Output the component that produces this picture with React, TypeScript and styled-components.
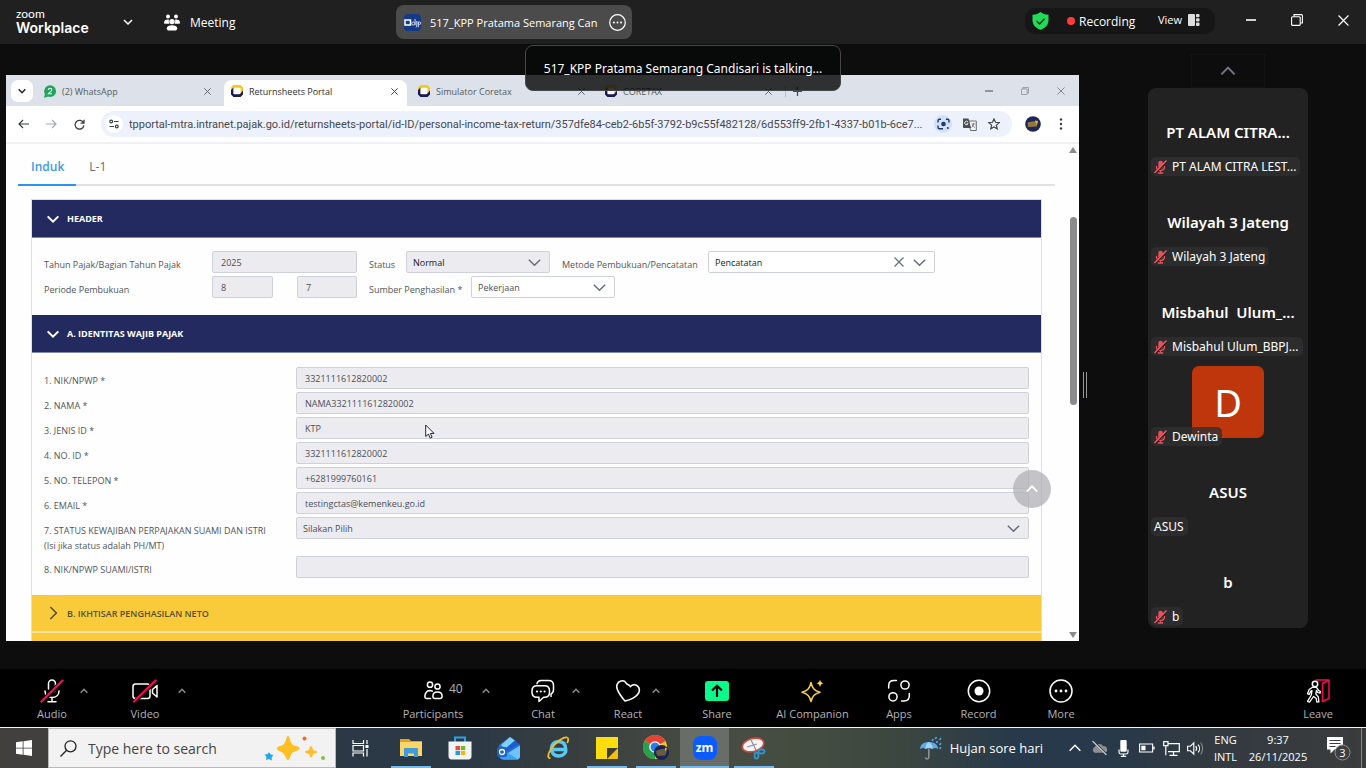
import React from "react";
import styled, { createGlobalStyle } from "styled-components";

const GlobalStyle = createGlobalStyle`
  * { box-sizing: border-box; }
  body { margin: 0; background: #0d0d0d; font-family: "Open Sans", "Noto Sans", sans-serif; }
  button, input, select { font-family: inherit; margin: 0; }
  button { border: 0; padding: 0; background: none; color: inherit; cursor: pointer; }
  svg { display: block; flex: none; }
`;

/* ---------- shell ---------- */

const Screen = styled.div`
  position: relative;
  display: flex;
  flex-direction: column;
  height: 100vh;
  color: #fff;
`;

const TitleBar = styled.header`
  display: flex;
  flex: none;
  height: 44px;
  background: #202020;
`;

const BrandArea = styled.div`
  display: flex;
  align-items: center;
  flex: 0 0 396px;
  padding-left: 16px;
`;

const Brand = styled.div`
  width: 106px;
  padding-bottom: 2px;
  font-family: Lato, sans-serif;
  font-size: 12px;
  line-height: 14px;
  strong { display: block; font-family: Inter, sans-serif; font-size: 14px; line-height: 14px; font-weight: 600; }
`;

const MeetingLabel = styled.div`
  display: flex;
  align-items: center;
  gap: 10px;
  margin-left: 30px;
  font-size: 12px;
`;

const MeetingPill = styled.div`
  display: flex;
  align-items: center;
  align-self: center;
  gap: 9px;
  width: 236px;
  height: 34px;
  padding: 0 6px 0 8px;
  border-radius: 8px;
  background: #4b4b4b;
  font-size: 11px;
  span { flex: 1; overflow: hidden; white-space: nowrap; }
`;

const StatusPill = styled.div`
  display: flex;
  align-items: center;
  width: 190px;
  height: 26px;
  margin: 8px 0 0 auto;
  padding: 0 15px 0 7px;
  border-radius: 10px;
  background: #161616;
  font-size: 12px;
`;

const Recording = styled.span`
  display: flex;
  align-items: center;
  gap: 4px;
  margin-left: 18px;
  &::before { content: ""; width: 8px; height: 8px; border-radius: 50%; background: #ff3b3b; }
`;

const ViewButton = styled.button`
  display: flex;
  align-items: center;
  gap: 6px;
  margin-left: auto;
  padding-bottom: 3px;
  font-size: 11px;
`;

const WindowControls = styled.div`
  display: flex;
  margin-left: 13px;
  height: 40px;
  button { display: grid; place-items: center; width: 46px; }
`;

const Stage = styled.main`
  display: flex;
  flex: 1;
  min-height: 0;
  padding: 0 58px 0 6px;
`;

const Toast = styled.div`
  position: absolute;
  top: 45px;
  left: 50%;
  transform: translateX(-50%);
  z-index: 5;
  display: flex;
  align-items: center;
  justify-content: center;
  width: 316px;
  height: 46px;
  border: 1px solid #454749;
  border-radius: 8px;
  background: rgba(7, 9, 9, 0.82);
  font-family: "Noto Sans", sans-serif;
  font-size: 12px;
  white-space: nowrap;
`;

/* ---------- shared browser window ---------- */

const SharedWindow = styled.section`
  position: relative;
  display: flex;
  flex: 1;
  flex-direction: column;
  min-width: 0;
  margin: 31px 0 28px;
  overflow: hidden;
  background: #fefefe;
  color: #4a4f56;
`;

const TabStrip = styled.div`
  display: flex;
  align-items: flex-end;
  flex: none;
  height: 31px;
  padding-left: 5px;
  background: #dde2ea;
`;

const TabSearch = styled.button`
  display: grid;
  place-items: center;
  width: 22px;
  height: 22px;
  margin: 0 4px 4px 0;
  border-radius: 7px;
  background: #fff;
`;

const BrowserTab = styled.div<{ $active?: boolean }>`
  display: flex;
  align-items: center;
  gap: 6px;
  width: 183px;
  height: 26px;
  margin-right: 4px;
  padding: 0 9px 4px 7px;
  border-radius: 8px 8px 0 0;
  background: ${(p) => (p.$active ? "#fff" : "transparent")};
  color: ${(p) => (p.$active ? "#2c2e31" : "#565b61")};
  font-size: 9px;
  span { flex: 1; }
`;

const NewTab = styled.button`
  width: 25px;
  height: 12px;
  margin-bottom: 9px;
  border-left: 1px solid #b9bec6;
  svg { margin-left: 7px; }
`;

const BrowserControls = styled.div`
  display: flex;
  align-self: center;
  margin-left: auto;
  color: #7e838a;
  button { display: grid; place-items: center; width: 36px; height: 24px; }
`;

const AddressRow = styled.div`
  display: flex;
  align-items: center;
  flex: none;
  height: 38px;
  padding: 0 4px 0 3px;
  border-bottom: 2px solid #f0f0f2;
  background: #fff;
  color: #3b3e43;
`;

const NavButton = styled.button`
  display: grid;
  place-items: center;
  width: 28px;
  height: 28px;
`;

const AddressPill = styled.div`
  display: flex;
  align-items: center;
  flex: 1;
  min-width: 0;
  height: 26px;
  margin: 0 13px 0 8px;
  padding: 0 12px 0 4px;
  border-radius: 13px;
  background: #edf1fb;
  input {
    flex: 1;
    min-width: 0;
    margin: 0 1px 0 6px;
    padding: 0;
    border: 0;
    outline: 0;
    background: none;
    color: #45484d;
    font-family: Roboto, sans-serif;
    font-size: 11px;
    text-overflow: ellipsis;
  }
`;

const RoundIcon = styled.button<{ $bg: string }>`
  display: grid;
  place-items: center;
  width: 18px;
  height: 18px;
  border-radius: 50%;
  background: ${(p) => p.$bg};
`;

const AddressActions = styled.div`
  display: flex;
  align-items: center;
  gap: 11px;
`;

const ProfileButton = styled.button`
  margin-right: 6px;
`;

const PageArea = styled.div`
  position: relative;
  display: flex;
  flex: 1;
  min-height: 0;
`;

const PageContent = styled.div`
  flex: 1;
  min-width: 0;
  padding: 0 12px;
  overflow: hidden;
`;

const ScrollTrack = styled.div`
  display: flex;
  flex-direction: column;
  align-items: center;
  flex: none;
  width: 12px;
  padding: 3px 0 3px;
  div { flex: none; width: 7px; height: 188px; margin: 64px 0 auto; border-radius: 4px; background: #8b8b8f; }
`;

const FormTabs = styled.nav`
  display: flex;
  height: 42px;
  border-bottom: 2px solid #dfe1e4;
`;

const FormTab = styled.button<{ $active?: boolean }>`
  height: 42px;
  padding: 5px 12px 0 13px;
  border-bottom: 2px solid ${(p) => (p.$active ? "#2e93ee" : "transparent")};
  color: ${(p) => (p.$active ? "#3c9bee" : "#666b71")};
  font-size: 12px;
  font-weight: ${(p) => (p.$active ? 600 : 400)};
`;

const Accordion = styled.div`
  margin: 13px 13px 0;
  border: 1px solid #dcdfe6;
  border-bottom: 0;
`;

const SectionHeader = styled.button<{ $closed?: boolean }>`
  display: flex;
  align-items: center;
  gap: 6px;
  width: 100%;
  height: 38px;
  padding-left: 13px;
  border-bottom: ${(p) => (p.$closed ? "2px solid #f6e3a4" : "1px solid #8187ab")};
  background: ${(p) => (p.$closed ? "#f9cb3b" : "#222a5f")};
  color: ${(p) => (p.$closed ? "#574f30" : "#fff")};
  font-size: 9px;
  font-weight: ${(p) => (p.$closed ? 600 : 700)};
`;

const HeaderBody = styled.div`
  display: flex;
  flex-direction: column;
  gap: 3px;
  padding: 13px 12px 17px;
`;

const HeaderRow = styled.div`
  display: flex;
  gap: 12px;
`;

const PeriodRange = styled.div`
  display: flex;
  justify-content: space-between;
  flex: none;
  width: 145px;
`;

const Label = styled.label<{ $w?: number }>`
  flex: none;
  width: ${(p) => (p.$w ? p.$w + "px" : "252px")};
  padding-top: 6px;
  color: #50545b;
  font-size: 9px;
  line-height: 15px;
  white-space: nowrap;
`;

const Field = styled.input<{ $w?: number }>`
  flex: ${(p) => (p.$w ? "none" : 1)};
  width: ${(p) => (p.$w ? p.$w + "px" : "auto")};
  min-width: 0;
  height: 22px;
  padding: 0 8px;
  border: 1px solid #ced1d9;
  border-radius: 2px;
  background: #ebebf0;
  color: #4b4f56;
  font-size: 9px;
`;

const SelectBox = styled.div<{ $w?: number; $white?: boolean; $dark?: boolean }>`
  display: flex;
  align-items: center;
  gap: 7px;
  flex: ${(p) => (p.$w ? "none" : 1)};
  width: ${(p) => (p.$w ? p.$w + "px" : "auto")};
  height: 22px;
  padding: 0 6px;
  border: 1px solid #ced1d9;
  border-radius: 2px;
  background: ${(p) => (p.$white ? "#fff" : "#ebebf0")};
  color: #666c75;
  select {
    flex: 1;
    min-width: 0;
    padding: 0;
    border: 0;
    appearance: none;
    background: none;
    color: ${(p) => (p.$dark ? "#17191c" : "#4b4f56")};
    font-size: 9px;
  }
`;

const IdentityBody = styled(HeaderBody)`
  padding-top: 14px;
`;

const IdentityRow = styled.div`
  display: flex;
  align-items: flex-start;
`;

const BackToTop = styled.button`
  position: absolute;
  right: 28px;
  bottom: 133px;
  display: grid;
  place-items: center;
  width: 38px;
  height: 38px;
  border-radius: 50%;
  background: rgba(176, 176, 182, 0.75);
`;

const Pointer = styled.svg`
  position: absolute;
  top: 349px;
  left: 419px;
`;

/* ---------- participants gallery ---------- */

const Splitter = styled.div`
  align-self: center;
  width: 4px;
  height: 26px;
  margin: 56px 0 0 4px;
  border: solid #9a9a9a;
  border-width: 0 1px;
`;

const GalleryColumn = styled.aside`
  flex: none;
  width: 160px;
  margin: 10px 0 0 61px;
`;

const GalleryUp = styled.button`
  display: grid;
  place-items: center;
  width: 74px;
  height: 34px;
  margin: 0 auto;
  border: 1px solid #121212;
`;

const Gallery = styled.ul`
  margin: 0;
  padding: 0;
  border-radius: 8px;
  background: #222;
  font-family: "Noto Sans", sans-serif;
  list-style: none;
`;

const Tile = styled.li`
  position: relative;
  display: grid;
  place-items: center;
  height: 90px;
  padding-bottom: 2px;
  overflow: hidden;
  font-size: 15px;
  font-weight: 600;
  white-space: pre;
`;

const Avatar = styled.div`
  display: grid;
  place-items: center;
  width: 72px;
  height: 72px;
  border-radius: 7px;
  background: #c0360c;
  font-size: 38px;
  font-weight: 400;
`;

const NameTag = styled.div`
  position: absolute;
  bottom: 2px;
  left: 3px;
  display: flex;
  align-items: center;
  gap: 5px;
  height: 19px;
  padding: 0 4px 0 3px;
  border-radius: 5px;
  background: rgba(48, 48, 48, 0.8);
  font-size: 12px;
  font-weight: 400;
`;

/* ---------- meeting toolbar ---------- */

const Toolbar = styled.footer`
  display: flex;
  flex: none;
  height: 59px;
  padding: 0 24px 0 28px;
  border-bottom: 1px solid #f4f4f4;
  background: #000;
  color: #b4b4b4;
`;

const ToolGroup = styled.div<{ $left?: boolean }>`
  display: flex;
  gap: 24px;
  width: ${(p) => (p.$left ? "360px" : "auto")};
`;

const LeaveSlot = styled.div`
  display: flex;
  margin-left: auto;
`;

const ToolSlot = styled.div`
  display: flex;
`;

const ToolButton = styled.button<{ $w: number }>`
  width: ${(p) => p.$w}px;
  padding-top: 2px;
  color: #b4b4b4;
  font-size: 11px;
  line-height: 16px;
  text-align: center;
  white-space: nowrap;
`;

const ToolIcon = styled.span`
  position: relative;
  display: flex;
  align-items: center;
  justify-content: center;
  height: 28px;
  margin-bottom: 1px;
  color: #fff;
`;

const Count = styled.span`
  position: absolute;
  top: 4px;
  left: 61px;
  color: #b4b4b4;
  font-size: 12px;
`;

const Caret = styled.button`
  display: grid;
  place-items: center;
  width: 16px;
  height: 44px;
  color: #8d8d8d;
`;

/* ---------- taskbar ---------- */

const Taskbar = styled.footer`
  display: flex;
  flex: none;
  height: 40px;
  background: linear-gradient(90deg, #42403d 0, #3b3c3d 20%, #2a3945 25%, #2c3945 35%, #383e3f 42%, #484d43 52%, #434c40 60%, #3a4541 67%, #27394a 74%, #27394a 81%, #323a41 88%, #3b3c3c 100%);
`;

const StartButton = styled.button`
  display: grid;
  place-items: center;
  width: 48px;
`;

const SearchBox = styled.label`
  display: flex;
  align-items: center;
  width: 288px;
  padding: 0 9px 0 11px;
  border: 1px solid #b9b9b9;
  background: #f2f2f2;
  input {
    flex: 1;
    min-width: 0;
    margin-left: 11px;
    padding: 0;
    border: 0;
    outline: 0;
    background: none;
    font-size: 14px;
  }
  input::placeholder { color: #454545; opacity: 1; }
`;

const TaskItem = styled.button<{ $open?: boolean; $active?: boolean }>`
  display: grid;
  place-items: center;
  width: 49px;
  background: linear-gradient(#76b9ed, #76b9ed) bottom / ${(p) => (p.$active ? "49px" : p.$open ? "40px" : "0")} 2px no-repeat,
    ${(p) => (p.$active ? "#696d68" : "transparent")};
`;

const TaskViewItem = styled(TaskItem)`
  width: 50px;
  padding-right: 2px;
`;

const Weather = styled.button`
  display: flex;
  align-items: center;
  gap: 7px;
  margin-left: auto;
  font-size: 13px;
`;

const Tray = styled.div`
  display: flex;
  align-items: center;
  margin-left: 20px;
  button { display: grid; place-items: center; width: 24px; height: 40px; }
`;

const TrayText = styled.div<{ $w: number }>`
  width: ${(p) => p.$w}px;
  font-size: 11px;
  line-height: 17px;
  text-align: center;
  align-self: center;
`;

const NotifyButton = styled.button`
  display: grid;
  place-items: center;
  width: 49px;
  padding-left: 4px;
`;

const ShowDesktop = styled.button`
  width: 5px;
  border-left: 1px solid #85888a;
`;

/* ---------- icons ---------- */

const Chevron = ({ size = 12, dir = "down", w = 1.5, color = "currentColor" }: { size?: number; dir?: "down" | "up" | "right"; w?: number; color?: string }) => {
  const d = { down: "M2 4 L6 8 L10 4", up: "M2 8 L6 4 L10 8", right: "M4 1.5 L8.5 6 L4 10.5" }[dir];
  return (
    <svg width={size} height={size} viewBox="0 0 12 12" fill="none" stroke={color} strokeWidth={w}>
      <path d={d} />
    </svg>
  );
};

const Cross = ({ size = 7, w = 1.3 }: { size?: number; w?: number }) => (
  <svg width={size} height={size} viewBox="0 0 10 10" fill="none" stroke="currentColor" strokeWidth={w}>
    <path d="M.5 .5 L9.5 9.5 M9.5 .5 L.5 9.5" />
  </svg>
);

const Restore = ({ size = 12 }: { size?: number }) => (
  <svg width={size} height={size} viewBox="0 0 12 12" fill="none" stroke="currentColor" strokeWidth="1.1">
    <rect x=".6" y="2.8" width="8.6" height="8.6" rx="1" />
    <path d="M3 2.6V.6h7.4a1 1 0 0 1 1 1V9H9.4" />
  </svg>
);

const Dash = ({ size = 10 }: { size?: number }) => (
  <svg width={size} height="2" viewBox="0 0 10 2" preserveAspectRatio="none"><path d="M0 1h10" stroke="currentColor" strokeWidth="1.6" /></svg>
);

const PeopleIcon = () => (
  <svg width="16" height="17" viewBox="0 0 16 17" fill="#fff">
    <circle cx="4" cy="2.6" r="2" /><circle cx="12" cy="2.6" r="2" />
    <circle cx="8" cy="7.6" r="2.7" />
    <path d="M0 8.8c0-2 1.6-3.2 3.8-3.2.5 0 .9.1 1.2.2-.5 1.6-.2 2.9.6 4H1.4C.5 9.8 0 9.4 0 8.8zM16 8.8c0-2-1.6-3.2-3.8-3.2-.5 0-.9.1-1.2.2.5 1.6.2 2.9-.6 4h4.2c.9 0 1.4-.4 1.4-1z" />
    <path d="M2.8 14.3c0-2 2.2-3.1 5.2-3.1s5.2 1.1 5.2 3.1c0 1.4-.9 2.3-2.2 2.3H5c-1.3 0-2.2-.9-2.2-2.3z" />
  </svg>
);

const OrgIcon = () => (
  <svg width="17" height="17" viewBox="0 0 17 17">
    <rect width="17" height="17" rx="4" fill="#143a86" />
    <path d="M1 6h5.5v5H1z" fill="none" stroke="#fff" strokeWidth="1.5" />
    <g fill="none" stroke="#cfdcf5" strokeWidth="1">
      <circle cx="9.3" cy="9.5" r="1.5" /><path d="M11.1 5v6.2M12.8 7v5.5l-1 .8M14.3 13.3V7.5" /><circle cx="15.5" cy="9.2" r="1.2" />
    </g>
  </svg>
);

const MoreCircle = ({ size = 17, w = 1.2 }: { size?: number; w?: number }) => (
  <svg width={size} height={size} viewBox="0 0 24 24" fill="none" stroke="currentColor" strokeWidth={(w * 24) / size}>
    <circle cx="12" cy="12" r="11" />
    <g fill="currentColor" stroke="none"><circle cx="7" cy="12" r="1.4" /><circle cx="12" cy="12" r="1.4" /><circle cx="17" cy="12" r="1.4" /></g>
  </svg>
);

const ShieldIcon = () => (
  <svg width="17" height="18" viewBox="0 0 17 18">
    <path d="M8.5 0C10.5 1.7 13 2.6 16.5 2.7V8c0 5-3.3 8.3-8 9.8C3.8 16.3.5 13 .5 8V2.7C4 2.6 6.5 1.7 8.5 0z" fill="#23d959" />
    <path d="M4.6 9l2.9 2.9 5-5.2" fill="none" stroke="#123d1f" strokeWidth="1.5" />
  </svg>
);

const ViewIcon = () => (
  <svg width="12" height="12" viewBox="0 0 12 12" fill="#dcdcdc">
    <rect y="0" width="7" height="12" rx="1" /><rect x="8" width="3.5" height="3.3" rx="1" /><rect x="8" y="4.3" width="3.5" height="3.3" rx="1" /><rect x="8" y="8.6" width="3.5" height="3.3" rx="1" />
  </svg>
);

const WhatsIcon = () => (
  <svg width="12" height="13" viewBox="0 0 12 13">
    <circle cx="6.1" cy="6.2" r="5.9" fill="#22a35b" /><path d="M0 12.8l1-4 3 3z" fill="#22a35b" />
    <path d="M4.3 5c0-1.1.8-1.7 1.8-1.7s1.7.6 1.7 1.5c0 1.3-1.8 2-3.5 4h3.7" fill="none" stroke="#e8fff0" strokeWidth="1.1" />
  </svg>
);

const CoreIcon = () => (
  <svg width="12" height="12" viewBox="0 0 12 12">
    <path d="M2.5 0H9.5l2.5 2.5V6.5L9.5 9V3H4L0 6V2.5z" fill="#f6c81e" />
    <path d="M0 5l2.5-2.5V9H9l3-3.5V9.5L9.5 12h-7L0 9.5z" fill="#1d1b54" />
    <rect x="2.7" y="2.7" width="6.5" height="6.5" rx="1" fill="#fff" />
  </svg>
);

const BackArrow = ({ flip, color }: { flip?: boolean; color: string }) => (
  <svg width="11" height="10" viewBox="0 0 11 10" fill="none" stroke={color} strokeWidth="1.2">
    <path d={flip ? "M0 5h10M6 1l4 4-4 4" : "M11 5H1M5 1L1 5l4 4"} />
  </svg>
);

const ReloadIcon = () => (
  <svg width="11" height="11" viewBox="0 0 11 11" fill="none" stroke="#3b3e43" strokeWidth="1.3">
    <path d="M9.6 4A4.4 4.4 0 1 0 9.9 6.3M10 .8v3.4H6.6" />
  </svg>
);

const TuneIcon = () => (
  <svg width="10" height="10" viewBox="0 0 10 10" fill="none" stroke="#3b3e43" strokeWidth="1.2">
    <circle cx="2.2" cy="2.5" r="1.4" /><path d="M5 2.5h4.5M.5 7.5H5" /><circle cx="7.8" cy="7.5" r="1.4" />
  </svg>
);

const LensIcon = () => (
  <svg width="13" height="12" viewBox="0 0 13 12" fill="none" stroke="#1b3a6b" strokeWidth="1.4">
    <path d="M1 4.5V2.8C1 1.800 1.500 1.200 2.500 1.200H4M9 1.200h1.500c1 0 1.500.6 1.500 1.600v1.700M1 7.500v1.700c0 1 .5 1.600 1.500 1.600h3.500" />
    <circle cx="6.500" cy="6" r="1.600" fill="#1b3a6b" /><circle cx="10.800" cy="9.900" r="1" fill="#1b3a6b" stroke="none" />
  </svg>
);

const TranslateIcon = () => (
  <svg width="14" height="13" viewBox="0 0 14 13">
    <path d="M5.5 3h7.8v9.5H7.5z" fill="#f3f4f6" stroke="#6a6e73" />
    <path d="M0 .5h5.5L8 10H1.2C.4 10 0 9.6 0 9z" fill="#4a4d52" />
    <path d="M5 4a1.8 1.8 0 1 0 .1 1.7H3.5" fill="none" stroke="#fff" strokeWidth=".9" />
    <path d="M8.5 6h4M10.5 5v1c-.2 1.6-1 2.7-2 3.5M9.3 7c.6 1.2 1.5 2 2.7 2.6" fill="none" stroke="#6a6e73" strokeWidth=".8" />
  </svg>
);

const StarIcon = () => (
  <svg width="12" height="12" viewBox="0 0 12 12" fill="none" stroke="#44474c" strokeWidth="1.2">
    <path d="M6 .9l1.5 3.4 3.7.3-2.8 2.5.8 3.7L6 8.9l-3.2 1.9.8-3.7L.8 4.6l3.7-.3z" />
  </svg>
);

const ProfileIcon = () => (
  <svg width="16" height="16" viewBox="0 0 16 16">
    <circle cx="8" cy="8" r="7.8" fill="#1f2558" /><path d="M2.5 6.5l5-1 5.5-.5-1 5.5-9 .5z" fill="#8e7a3c" /><path d="M10 4.5l3 .5-1.5 4z" fill="#e2b739" />
  </svg>
);

const MutedMic = () => (
  <svg width="13" height="14" viewBox="0 0 13 14">
    <rect x="4.3" y=".8" width="4.6" height="8" rx="2.3" fill="#e8515c" />
    <path d="M2.5 6v.8c0 2 1.6 3.7 4 3.7s4-1.7 4-3.7V6M6.5 10.5v2.3M3.8 13h5.4" fill="none" stroke="#e8515c" strokeWidth="1.3" />
    <path d="M1 13L13 1" stroke="#222" strokeWidth="2.4" /><path d="M.5 13L12.5 .5" stroke="#f0606a" strokeWidth="1.4" />
  </svg>
);

const stroke = { fill: "none", stroke: "#fff", strokeWidth: 1.5, strokeLinecap: "round" as const, strokeLinejoin: "round" as const };

const AudioIcon = () => (
  <svg width="24" height="24" viewBox="0 0 24 24" {...stroke}>
    <path d="M8.5 10V4.5a3.5 3.5 0 0 1 7 0V10a3.5 3.5 0 0 1-5 3.2" />
    <path d="M5 12c0 4 3 6.5 7 6.5s7-2.5 7-6.5M12 18.5v4M8 22.7h8" />
    <path d="M2 22.5L23 1.5" stroke="#000" strokeWidth="4.5" /><path d="M1.5 22.5L22.5 1.5" stroke="#f50b54" strokeWidth="2.4" />
  </svg>
);

const VideoIcon = () => (
  <svg width="26" height="24" viewBox="0 0 26 24" {...stroke}>
    <path d="M18 9V17c0 1.6-1 2.5-2.5 2.5H3.5C2 19.5 1 18.6 1 17V7.5C1 6 2 5 3.5 5H15c2 0 3 1 3 3zM20.5 10.5L25 6.5v11.5l-4.5-4z" />
    <path d="M2.5 23L24 1.5" stroke="#000" strokeWidth="4" /><path d="M2 22.5L23.5 1.5" stroke="#f50b54" strokeWidth="2.4" />
  </svg>
);

const ParticipantsIcon = () => (
  <svg width="19" height="19" viewBox="0 0 19 19" {...stroke}>
    <circle cx="6" cy="3.7" r="2.6" /><circle cx="13.5" cy="5.5" r="2.6" />
    <path d="M6.5 17.5H2.8c-1.2 0-2-.8-1.9-2C1.1 12 3 9.6 5.8 9.4c1 0 1.9.3 2.6.7M13.5 11c-2.7 0-4.6 1.7-4.6 4.2 0 1.5.9 2.3 2.2 2.3h4.8c1.3 0 2.2-.8 2.2-2.3 0-2.5-1.9-4.2-4.6-4.2z" />
  </svg>
);

const ChatIcon = () => (
  <svg width="24" height="24" viewBox="0 0 24 24" {...stroke}>
    <path d="M6 4.7C6.5 2.5 8 1.5 10 1.5h7.5C20.5 1.5 22.5 3.5 22.5 6.5v4c0 2.5-.8 3.7-2.5 4.5v2.5" />
    <path d="M6 6.7h7.5c3 0 5 2 5 5v1.5c0 3-2 5-5 5h-.8l-4.7 4.3V18.2H6c-3 0-5-2-5-5v-1.5c0-3 2-5 5-5z" />
    <g fill="#fff" stroke="none"><circle cx="6" cy="12.5" r="1.1" /><circle cx="9.8" cy="12.5" r="1.1" /><circle cx="13.6" cy="12.5" r="1.1" /></g>
  </svg>
);

const HeartIcon = () => (
  <svg width="26" height="24" viewBox="0 0 26 24" {...stroke} strokeWidth="1.6">
    <path d="M11.5 4.7C10.2 2.3 7.7 1.3 5.3 2.2 2.3 3.3 1 6.7 2.2 10c1.3 4 4.3 8 7.8 12 5.2-1.3 9.8-3.3 12.6-6.6 2.3-2.7 2.5-6.2 0-8.3-2.3-2-5.3-1.6-7.1.5-.8-1.3-2.5-2.3-4-2.9z" />
  </svg>
);

const ShareIcon = () => (
  <svg width="24" height="20" viewBox="0 0 24 20">
    <rect width="24" height="20" rx="3" fill="#08fb8b" /><path d="M12 16V5M7 9.5L12 4.7l5 4.8" fill="none" stroke="#000" strokeWidth="2.2" />
  </svg>
);

const SparkIcon = () => (
  <svg width="24" height="24" viewBox="0 0 24 24" {...stroke} stroke="#ffcf42">
    <path d="M10 3.5c1.3 5.8 3.3 8 9 9.7-5.7 1.7-7.7 4-9 9.3-1.3-5.3-3.3-7.6-9-9.3 5.7-1.7 7.7-3.9 9-9.7z" />
    <path d="M19 .5c.6 2.3 1.3 3 3.6 3.7-2.3.8-3 1.5-3.6 3.9-.6-2.4-1.3-3.1-3.6-3.9 2.3-.7 3-1.4 3.6-3.7z" fill="#ffcf42" stroke="none" />
  </svg>
);

const AppsIcon = () => (
  <svg width="24" height="24" viewBox="0 0 24 24" {...stroke}>
    <path d="M9.5 1.5H7C3.5 1.5 1.7 3.3 1.7 6.7V9M14.5 22H17c3.5 0 5.3-1.8 5.3-5.2v-2.3" />
    <circle cx="18" cy="6" r="4.1" /><circle cx="6" cy="17.8" r="4.1" />
  </svg>
);

const RecordIcon = () => (
  <svg width="24" height="24" viewBox="0 0 24 24" {...stroke}>
    <circle cx="12" cy="12" r="10.7" /><circle cx="12" cy="12" r="4.5" fill="#fff" stroke="none" />
  </svg>
);

const LeaveIcon = () => (
  <svg width="24" height="24" viewBox="0 0 24 24" {...stroke}>
    <path d="M10 1h13v18.500l-6.500 3V4.500L23 1" stroke="#f50b54" />
    <circle cx="9" cy="5" r="2.700" />
    <path d="M6.500 8.300L3.200 10.500 1.500 14.800l1.700.6 1.600-3.200 1.200-.6-.7 4.400L1.500 22.300l2 .9L7.500 17.500l2.700 2 .7 3.700 2-.3-.6-5L9.800 15l.6-3.700 1.300 2.200 2.300.7.400-1.700-1.700-.8L10.500 8.300z" strokeWidth="1.300" />
  </svg>
);

const WindowsIcon = () => (
  <svg width="16" height="16" viewBox="0 0 16 16" fill="#fff"><path d="M0 2.3l6.7-1v6.4H0zM7.5 1.2L16 0v7.7H7.5zM0 8.4h6.7v6.3L0 13.7zM7.5 8.4H16V16l-8.5-1.2z" /></svg>
);

const SearchIcon = () => (
  <svg width="17" height="17" viewBox="0 0 17 17" fill="none" stroke="#222" strokeWidth="1.3"><circle cx="10.5" cy="6.3" r="5.5" /><path d="M6.6 10.3L.5 16.5" /></svg>
);

const SparkleArt = () => (
  <svg width="62" height="26" viewBox="0 0 62 26">
    <path d="M24 1c2 0 2 6.5 4.5 8.500S35.500 11 35.500 13.500s-4.500 2-7 4S26 25 24 25s-2.500-5-5-7-6-2-6-4.500 4-2 6.500-4S22 1 24 1z" fill="#fdbf22" />
    <path d="M47 11c1.5 0 1.5 3 2.5 4s3.500.5 3.500 2-2.500 1-3.500 2-1 3.500-2.500 3.500-1-2.500-2.500-3.500-3.500-.5-3.500-2 2.500-1 3.500-2 1-4 2.500-4z" fill="#fdbf32" />
    <path d="M5 17l1.500 2.500 3 .5-2 2.500.5 3-3-1.500-3 1 .5-3-2-2.500 3-.3z" fill="#1da7ee" />
    <circle cx="40.500" cy="3.500" r="2" fill="#ef6a2c" /><circle cx="59" cy="23" r="2" fill="#7fc33f" />
  </svg>
);

const TaskViewIcon = () => (
  <svg width="17" height="17" viewBox="0 0 17 17" fill="none" stroke="#fff" strokeWidth="1.2">
    <path d="M1 0v3.5h10.5V0M1 16.5V13h10.5v3.5M1 5.5h10.5v5.5H1zM15 0v4M15 9v7.5" /><path d="M13.5 5h3v3h-3z" fill="#fff" stroke="none" />
  </svg>
);

const FolderIcon = () => (
  <svg width="22" height="20" viewBox="0 0 22 20"><path d="M0 1h9l2 2h11v6H0z" fill="#e2a01d" /><path d="M0 4h22v14H0z" fill="#fbd568" /><path d="M4 19v-8c0-.6.4-1 1-1h12c.6 0 1 .4 1 1v8h-4v-3.5H8V19z" fill="#409bd8" /></svg>
);

const StoreIcon = () => (
  <svg width="24" height="24" viewBox="0 0 24 24"><path d="M7 6V1.5h10V6" fill="none" stroke="#2ba4e6" strokeWidth="2" /><path d="M.5 5.5h23V20c0 2-1 3.5-3 3.5h-17c-2 0-3-1.5-3-3.5z" fill="#f3f4f6" /><path d="M7.5 10H12v4H7.5z" fill="#e9502b" /><path d="M12.8 10h4.4v4h-4.4z" fill="#78b72a" /><path d="M7.5 14.8H12V19H7.5z" fill="#1e9fe5" /><path d="M12.8 14.8h4.4V19h-4.4z" fill="#f8b613" /></svg>
);

const OutlookIcon = () => (
  <svg width="24" height="24" viewBox="0 0 24 24"><path d="M2 9L12 1.5Q13 1 14 1.5L23 9v11c0 2-1 3-3 3H5c-2 0-3-1-3-3z" fill="#2a6fdc" /><path d="M4 9L13 1l5 3.5L8 13z" fill="#7fd0f9" /><path d="M8 13L18 4.5l4 3.5L11 15z" fill="#1d5ccf" /><path d="M23 9.5V20c0 2-1 3.5-3 3.5H6L11 17z" fill="#6cc4fa" /><path d="M3 20l8-3 10 6.5H6c-2 0-3-1.5-3-3.5z" fill="#3aa0f2" /><rect y="11" width="10" height="10" rx="2" fill="#1763c6" /><circle cx="5" cy="16" r="2.5" fill="none" stroke="#fff" strokeWidth="1.3" /></svg>
);

const ExplorerIcon = () => (
  <svg width="24" height="24" viewBox="0 0 24 24" fill="none"><path d="M20 15c-1.2 3.3-3.8 5-7.3 5-4.5 0-7.3-2.9-7.3-7.2S8.3 5.4 12.7 5.4c4.3 0 7.2 3 7 8H6.5" stroke="#5bc8f4" strokeWidth="3.5" /><path d="M4.5 22c-3.3.8-3-4 1-9.5S17 .5 21 1.5c2 .6 1.2 3.5.2 5.5" stroke="#f1c022" strokeWidth="1.8" /></svg>
);

const StickyIcon = () => (
  <svg width="22" height="22" viewBox="0 0 22 22"><path d="M0 0h22v11L11 22H0z" fill="#fedc0e" /><path d="M11 11h11v11H11z" fill="#3f3d3a" /><path d="M11 22l11-11v9.5c0 1-.5 1.5-1.5 1.5z" fill="#f2c006" /></svg>
);

const ChromeIcon = () => (
  <svg width="26" height="26" viewBox="0 0 26 26"><circle cx="12" cy="12" r="12" fill="#f3c22b" /><path d="M12 12L1.6 6A12 12 0 0 1 22.4 6z" fill="#e14434" /><path d="M12 12L12 24A12 12 0 0 1 1.6 6L6.5 9z" fill="#26a14c" /><circle cx="12" cy="12" r="5.8" fill="#fff" /><circle cx="12" cy="12" r="4.5" fill="#2d7be9" /><circle cx="18.5" cy="17.5" r="7.5" fill="#1b2153" /><path d="M12.5 16l6-2 6-.5-2 7-8 .5z" fill="#665c40" /><path d="M22 12.5l2 1-2 3z" fill="#e5b72e" /></svg>
);

const ZoomBadge = styled.span`
  display: grid;
  place-items: center;
  width: 24px;
  height: 24px;
  padding-bottom: 2px;
  border-radius: 8px;
  background: #0b5cff;
  color: #fff;
  font-size: 12px;
  font-weight: 700;
`;

const SnipIcon = () => (
  <svg width="25" height="23" viewBox="0 0 25 23"><ellipse cx="12" cy="8" rx="11" ry="6.5" transform="rotate(-15 12 8)" fill="#f4f4f6" stroke="#d8473f" strokeWidth="1.6" /><path d="M10 3l5 10M16 7L6 10" stroke="#8c9299" strokeWidth="1.3" /><g fill="none" stroke="#2f95cf" strokeWidth="1.8"><ellipse cx="15.5" cy="18.5" rx="2" ry="3" /><ellipse cx="20.5" cy="14.5" rx="3" ry="2" /></g></svg>
);

const UmbrellaIcon = () => (
  <svg width="24" height="24" viewBox="0 0 22 24" preserveAspectRatio="none"><path d="M1 13C1 8.5 4.5 6 9 6s8.5 2.5 8.5 7c-2-1.2-3.5-1.2-5 0-2-1.2-4.5-1.2-6.5 0-1.7-1.2-3.3-1.2-5 0z" fill="#5aabe8" /><path d="M6 13c0-4 1-6 3-7 2 1 3.3 3 3.5 7-2-1.2-4.5-1.2-6.5 0z" fill="#a5d4f5" /><path d="M9 12.5V21c0 2.5-3 2.5-3.2.3" fill="none" stroke="#8b8e92" strokeWidth="1.5" /><path d="M13 3l-1 2M16 1l-1 2M20 2l-1 2M17 5l-1 2M20 7l-1 2M20 11l-1 2" stroke="#4da2e8" strokeWidth="1.6" /></svg>
);

const CloudOff = () => (
  <svg width="17" height="16" viewBox="0 0 15 15"><path d="M3 12a3 3 0 0 1 0-5.5A4.5 4.5 0 0 1 11 5.8a3.2 3.2 0 0 1 1.5 6.2z" fill="#8d9092" /><path d="M1.5 1l13 13" stroke="#2d3b47" strokeWidth="2" /><path d="M1 1l13 13" stroke="#dedede" strokeWidth="1.1" /></svg>
);

const TrayMic = () => (
  <svg width="11" height="17" viewBox="0 0 10 16"><rect x="2" width="6" height="11" rx="1" fill="#fff" /><path d="M.8 9v2.5c0 1 .7 1.7 1.7 1.7h5c1 0 1.7-.7 1.7-1.7V9M5 13v2.5M2.5 15.4h5" fill="none" stroke="#fff" strokeWidth="1.1" /></svg>
);

const BatteryIcon = () => (
  <svg width="16" height="10" viewBox="0 0 16 10"><path d="M.6 1h13v8H.6z" fill="none" stroke="#fff" strokeWidth="1.1" /><path d="M2.3 2.7H6.5v4.6H2.3zM14.2 3.5h1.4v3h-1.4z" fill="#fff" /></svg>
);

const NetworkIcon = () => (
  <svg width="17" height="15" viewBox="0 0 17 15" fill="none" stroke="#fff" strokeWidth="1.2"><path d="M5.5 2.6h10.8v8H5M10.5 10.6v3.5M6.5 14.3h8M.7 .7h4.3v4H.7zM2.8 4.7v9.6" /></svg>
);

const VolumeIcon = () => (
  <svg width="17" height="15" viewBox="0 0 15 13" fill="none" stroke="#fff" strokeWidth="1"><path d="M.5 4.5H3l3-3v10l-3-3H.5zM7.7 4.5c1 1.2 1 2.8 0 4M9.8 3c1.7 2 1.7 5 0 7" /><path d="M12 1.2c2.4 3 2.4 7.6 0 10.6" stroke="#85898c" /></svg>
);

const NotifyIcon = () => (
  <svg width="25" height="25" viewBox="0 0 25 25">
    <path d="M1 1h16v12.500H8.500l-4 4V13.500H1z" fill="#fff" /><path d="M3.500 4.500h11M3.500 7.500h11M3.500 10.500h6" stroke="#3a3c3e" strokeWidth="1.200" />
    <circle cx="16.500" cy="16.500" r="7.500" fill="#3c3e40" stroke="#8e9092" />
    <text x="16.500" y="20.500" fill="#fff" fontSize="11" fontFamily="Open Sans, sans-serif" textAnchor="middle">3</text>
  </svg>
);

/* ---------- data ---------- */

const identity = [
  ["1. NIK/NPWP *", "3321111612820002"],
  ["2. NAMA *", "NAMA3321111612820002"],
  ["3. JENIS ID *", "KTP"],
  ["4. NO. ID *", "3321111612820002"],
  ["5. NO. TELEPON *", "+6281999760161"],
  ["6. EMAIL *", "testingctas@kemenkeu.go.id"],
];

const participants = [
  { title: "PT ALAM CITRA...", tag: "PT ALAM CITRA LEST...", muted: true },
  { title: "Wilayah 3 Jateng", tag: "Wilayah 3 Jateng", muted: true },
  { title: "Misbahul  Ulum_...", tag: "Misbahul Ulum_BBPJ...", muted: true },
  { title: "D", tag: "Dewinta", muted: true, avatar: true },
  { title: "ASUS", tag: "ASUS", muted: false },
  { title: "b", tag: "b", muted: true },
];

const tools = [
  { name: "Participants", w: 90, icon: <ParticipantsIcon />, caret: true, count: "40" },
  { name: "Chat", w: 50, icon: <ChatIcon />, caret: true },
  { name: "React", w: 40, icon: <HeartIcon />, caret: true },
  { name: "Share", w: 58, icon: <ShareIcon /> },
  { name: "AI Companion", w: 85, icon: <SparkIcon /> },
  { name: "Apps", w: 40, icon: <AppsIcon /> },
  { name: "Record", w: 71, icon: <RecordIcon /> },
  { name: "More", w: 46, icon: <MoreCircle size={24} w={1.5} /> },
];

const Tool = ({ name, w, icon, caret, count }: { name: string; w: number; icon: React.ReactNode; caret?: boolean; count?: string }) => (
  <ToolSlot>
    <ToolButton $w={w}>
      <ToolIcon>{icon}{count && <Count>{count}</Count>}</ToolIcon>
      {name}
    </ToolButton>
    {caret && <Caret aria-label={name + " options"}><Chevron size={10} dir="up" w={1.8} /></Caret>}
  </ToolSlot>
);

const browserTabs = [
  { title: "(2) WhatsApp", icon: <WhatsIcon /> },
  { title: "Returnsheets Portal", icon: <CoreIcon />, active: true },
  { title: "Simulator Coretax", icon: <CoreIcon /> },
  { title: "CORETAX", icon: <CoreIcon /> },
];

export default function App() {
  return (
    <Screen>
      <GlobalStyle />
      <TitleBar>
        <BrandArea>
          <Brand>zoom<strong>Workplace</strong></Brand>
          <button aria-label="Workplace menu"><Chevron size={12} /></button>
          <MeetingLabel><PeopleIcon />Meeting</MeetingLabel>
        </BrandArea>
        <MeetingPill>
          <OrgIcon />
          <span>517_KPP Pratama Semarang Can</span>
          <button aria-label="Meeting information"><MoreCircle /></button>
        </MeetingPill>
        <StatusPill>
          <ShieldIcon />
          <Recording>Recording</Recording>
          <ViewButton>View<ViewIcon /></ViewButton>
        </StatusPill>
        <WindowControls>
          <button aria-label="Minimize"><Dash /></button>
          <button aria-label="Restore"><Restore /></button>
          <button aria-label="Close"><Cross size={11} w={1.1} /></button>
        </WindowControls>
      </TitleBar>

      <Toast role="status">517_KPP Pratama Semarang Candisari is talking...</Toast>

      <Stage>
        <SharedWindow>
          <TabStrip>
            <TabSearch aria-label="Search tabs"><Chevron size={10} color="#222" w={1.8} /></TabSearch>
            {browserTabs.map((t) => (
              <BrowserTab key={t.title} $active={t.active}>
                {t.icon}<span>{t.title}</span><button aria-label={"Close " + t.title}><Cross /></button>
              </BrowserTab>
            ))}
            <NewTab aria-label="New tab">
              <svg width="9" height="9" viewBox="0 0 9 9" stroke="#44474c" strokeWidth="1.2"><path d="M4.5 0v9M0 4.5h9" /></svg>
            </NewTab>
            <BrowserControls>
              <button aria-label="Minimize browser"><Dash size={8} /></button>
              <button aria-label="Restore browser"><Restore size={8} /></button>
              <button aria-label="Close browser"><Cross size={8} w={1.2} /></button>
            </BrowserControls>
          </TabStrip>
          <AddressRow>
            <NavButton aria-label="Back"><BackArrow color="#3b3e43" /></NavButton>
            <NavButton aria-label="Forward"><BackArrow flip color="#a7aaae" /></NavButton>
            <NavButton aria-label="Reload"><ReloadIcon /></NavButton>
            <AddressPill>
              <RoundIcon $bg="#fff" aria-label="Site information"><TuneIcon /></RoundIcon>
              <input aria-label="Address" readOnly value="tpportal-mtra.intranet.pajak.go.id/returnsheets-portal/id-ID/personal-income-tax-return/357dfe84-ceb2-6b5f-3792-b9c55f482128/6d553ff9-2fb1-4337-b01b-6ce7..." />
              <AddressActions>
                <RoundIcon $bg="#d2e0fb" aria-label="Search with Lens"><LensIcon /></RoundIcon>
                <button aria-label="Translate"><TranslateIcon /></button>
                <button aria-label="Bookmark"><StarIcon /></button>
              </AddressActions>
            </AddressPill>
            <ProfileButton aria-label="Profile"><ProfileIcon /></ProfileButton>
            <NavButton aria-label="Browser menu">
              <svg width="4" height="12" viewBox="0 0 4 12" fill="#3b3e43"><circle cx="2" cy="1.5" r="1.2" /><circle cx="2" cy="6" r="1.2" /><circle cx="2" cy="10.5" r="1.2" /></svg>
            </NavButton>
          </AddressRow>
          <PageArea>
            <PageContent>
              <FormTabs>
                <FormTab $active>Induk</FormTab>
                <FormTab>L-1</FormTab>
              </FormTabs>
              <Accordion>
                <SectionHeader><Chevron size={16} w={1.5} />HEADER</SectionHeader>
                <HeaderBody>
                  <HeaderRow>
                    <Label $w={156} htmlFor="tahun">Tahun Pajak/Bagian Tahun Pajak</Label>
                    <Field id="tahun" $w={145} readOnly value="2025" />
                    <Label $w={25} htmlFor="status">Status</Label>
                    <SelectBox $w={144} $dark>
                      <select id="status"><option>Normal</option></select><Chevron size={17} w={1} />
                    </SelectBox>
                    <Label $w={134} htmlFor="metode">Metode Pembukuan/Pencatatan</Label>
                    <SelectBox $w={227} $white $dark>
                      <select id="metode"><option>Pencatatan</option></select>
                      <button aria-label="Clear"><Cross size={10} w={1.2} /></button>
                      <Chevron size={17} w={1} />
                    </SelectBox>
                  </HeaderRow>
                  <HeaderRow>
                    <Label $w={156} htmlFor="periode">Periode Pembukuan</Label>
                    <PeriodRange>
                      <Field id="periode" $w={61} readOnly value="8" />
                      <Field aria-label="Periode akhir" $w={60} readOnly value="7" />
                    </PeriodRange>
                    <Label $w={90} htmlFor="sumber">Sumber Penghasilan *</Label>
                    <SelectBox $w={144} $white>
                      <select id="sumber"><option>Pekerjaan</option></select><Chevron size={17} w={1} />
                    </SelectBox>
                  </HeaderRow>
                </HeaderBody>
                <SectionHeader><Chevron size={16} w={1.5} />A. IDENTITAS WAJIB PAJAK</SectionHeader>
                <IdentityBody>
                  {identity.map(([label, value], i) => (
                    <IdentityRow key={label}>
                      <Label htmlFor={"id" + i}>{label}</Label>
                      <Field id={"id" + i} readOnly value={value} />
                    </IdentityRow>
                  ))}
                  <IdentityRow>
                    <Label htmlFor="kewajiban">7. STATUS KEWAJIBAN PERPAJAKAN SUAMI DAN ISTRI<br />(Isi jika status adalah PH/MT)</Label>
                    <SelectBox>
                      <select id="kewajiban"><option>Silakan Pilih</option></select><Chevron size={17} w={1} />
                    </SelectBox>
                  </IdentityRow>
                  <IdentityRow>
                    <Label htmlFor="pasangan">8. NIK/NPWP SUAMI/ISTRI</Label>
                    <Field id="pasangan" readOnly value="" />
                  </IdentityRow>
                </IdentityBody>
                <SectionHeader $closed><Chevron size={16} dir="right" w={1.2} />B. IKHTISAR PENGHASILAN NETO</SectionHeader>
                <SectionHeader $closed aria-label="Bagian berikutnya" />
              </Accordion>
            </PageContent>
            <ScrollTrack>
              <svg width="8" height="6" viewBox="0 0 8 6" fill="#8b8b8f"><path d="M4 0l4 6H0z" /></svg>
              <div />
              <svg width="8" height="6" viewBox="0 0 8 6" fill="#8b8b8f"><path d="M4 6l4-6H0z" /></svg>
            </ScrollTrack>
          </PageArea>
          <BackToTop aria-label="Back to top"><Chevron size={16} dir="up" color="#fff" w={1.3} /></BackToTop>
          <Pointer width="10" height="15" viewBox="0 0 10 15"><path d="M.7 1v11.5l2.7-2.4 1.8 4 1.9-.9-1.8-3.8H9z" fill="#fff" stroke="#23233a" /></Pointer>
        </SharedWindow>

        <Splitter />

        <GalleryColumn>
          <GalleryUp aria-label="Scroll up"><Chevron size={20} dir="up" w={1.2} color="#77748a" /></GalleryUp>
          <Gallery>
            {participants.map((p) => (
              <Tile key={p.tag}>
                {p.avatar ? <Avatar>{p.title}</Avatar> : p.title}
                <NameTag>{p.muted && <MutedMic />}{p.tag}</NameTag>
              </Tile>
            ))}
          </Gallery>
        </GalleryColumn>
      </Stage>

      <Toolbar>
        <ToolGroup $left>
          <Tool name="Audio" w={48} icon={<AudioIcon />} caret />
          <Tool name="Video" w={58} icon={<VideoIcon />} caret />
        </ToolGroup>
        <ToolGroup>
          {tools.map((t) => <Tool key={t.name} {...t} />)}
        </ToolGroup>
        <LeaveSlot><Tool name="Leave" w={48} icon={<LeaveIcon />} /></LeaveSlot>
      </Toolbar>

      <Taskbar>
        <StartButton aria-label="Start"><WindowsIcon /></StartButton>
        <SearchBox>
          <SearchIcon />
          <input aria-label="Search" placeholder="Type here to search" />
          <SparkleArt />
        </SearchBox>
        <TaskViewItem aria-label="Task view"><TaskViewIcon /></TaskViewItem>
        <TaskItem aria-label="File Explorer" $open><FolderIcon /></TaskItem>
        <TaskItem aria-label="Store"><StoreIcon /></TaskItem>
        <TaskItem aria-label="Outlook"><OutlookIcon /></TaskItem>
        <TaskItem aria-label="Internet Explorer"><ExplorerIcon /></TaskItem>
        <TaskItem aria-label="Sticky Notes" $open><StickyIcon /></TaskItem>
        <TaskItem aria-label="Chrome" $open><ChromeIcon /></TaskItem>
        <TaskItem aria-label="Zoom" $active><ZoomBadge>zm</ZoomBadge></TaskItem>
        <TaskItem aria-label="Snipping Tool" $open><SnipIcon /></TaskItem>
        <Weather><UmbrellaIcon />Hujan sore hari</Weather>
        <Tray>
          <button aria-label="Hidden icons"><Chevron size={16} dir="up" w={1.1} /></button>
          <button aria-label="OneDrive"><CloudOff /></button>
          <button aria-label="Microphone"><TrayMic /></button>
          <button aria-label="Battery"><BatteryIcon /></button>
          <button aria-label="Network"><NetworkIcon /></button>
          <button aria-label="Volume"><VolumeIcon /></button>
        </Tray>
        <TrayText $w={37}>ENG<br />INTL</TrayText>
        <TrayText $w={68}>9:37<br />26/11/2025</TrayText>
        <NotifyButton aria-label="Notifications"><NotifyIcon /></NotifyButton>
        <ShowDesktop aria-label="Show desktop" />
      </Taskbar>
    </Screen>
  );
}
